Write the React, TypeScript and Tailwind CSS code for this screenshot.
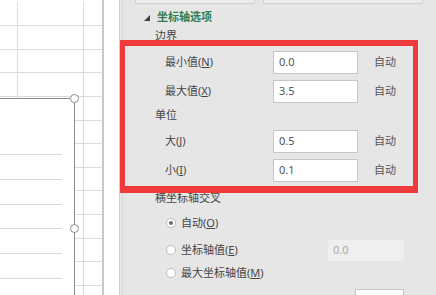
import React from "react";

const font = "font-['Noto_Sans','Noto_Sans_CJK_SC',sans-serif]";

function Key({ k }: { k: string }) {
  return (
    <>
      (<span className="underline underline-offset-1">{k}</span>)
    </>
  );
}

function Sheet() {
  const rows = Array.from({ length: 13 });
  const chartLines = Array.from({ length: 6 });
  return (
    <div className="relative w-[104px] h-full bg-white border-r-2 border-[#c9c9c9] overflow-hidden shrink-0">
      <div className="flex flex-col mt-[2.35px]">
        {rows.map((_, i) => (
          <div key={i} className="flex h-[23.65px] shrink-0 border-b border-[#dcdcdc]">
            <div className="w-[18px] border-r border-[#dcdcdc]" />
            <div className="w-[66px] border-r border-[#dcdcdc]" />
            <div className="flex-1" />
          </div>
        ))}
      </div>
      {/* chart object over the grid */}
      <div className="absolute left-0 top-[98px] w-[75px] h-[260px] bg-white border-t border-r border-[#8c8c8c]">
        <div className="flex flex-col pt-[55px]">
          {chartLines.map((_, i) => (
            <div key={i} className="w-[62px] h-[24.8px] shrink-0 border-t border-[#dadada]" />
          ))}
        </div>
      </div>
      <div className="absolute left-[70px] top-[94px] w-[9px] h-[9px] rounded-full bg-white border border-[#8c8c8c]" />
      <div className="absolute left-[70px] top-[224px] w-[9px] h-[9px] rounded-full bg-white border border-[#8c8c8c]" />
    </div>
  );
}

function ValueRow({ label, k, value }: { label: string; k: string; value: string }) {
  return (
    <div className="flex items-center h-[23px] mt-[6px] shrink-0">
      <div className="w-[128px] pl-[20px] text-[11px] text-[#454545]">
        {label}
        <Key k={k} />
      </div>
      <div className="w-[85px] h-[23px] bg-white border border-[#c6c6c6] flex items-center pl-[5px] text-[11px] text-[#555]">
        {value}
      </div>
      <div className="ml-[16px] text-[11px] text-[#555]">自动</div>
    </div>
  );
}

function Radio({ on }: { on?: boolean }) {
  return (
    <div className="w-[10px] h-[10px] rounded-full bg-white border border-[#bdbdbd] flex items-center justify-center shrink-0">
      {on && <div className="w-[4px] h-[4px] rounded-full bg-[#6a6a6a]" />}
    </div>
  );
}

function Panel() {
  return (
    <div className="relative flex-1 h-full bg-[#e6e6e6] border-l border-[#cfcfcf] overflow-hidden">
      <div className="min-h-full ml-[2px] border-l border-[#d6d6d6] flex flex-col">
        <div className="flex h-[4px] ml-[12px] gap-[8px] shrink-0">
          <div className="w-[120px] border-x border-b border-[#d0d0d0] bg-[#ebebeb]" />
          <div className="w-[160px] border-x border-b border-[#d0d0d0] bg-[#ebebeb]" />
        </div>

        <div className="flex items-center h-[18px] mt-[4px] pl-[21px] shrink-0">
          <svg width="6" height="6" viewBox="0 0 6 6" className="mt-[1px]">
            <polygon points="6,0 6,6 0,6" fill="#404040" />
          </svg>
          <span className="ml-[7px] text-[11px] font-semibold text-[#2f7d52]">坐标轴选项</span>
        </div>

        <div className="flex items-center h-[18px] mt-[1px] pl-[32px] text-[11px] text-[#454545] shrink-0">边界</div>

        <div className="flex flex-col pl-[22px] shrink-0">
          <ValueRow label="最小值" k="N" value="0.0" />
          <ValueRow label="最大值" k="X" value="3.5" />
        </div>

        <div className="flex items-center h-[18px] mt-[3px] pl-[32px] text-[11px] text-[#454545] shrink-0">单位</div>

        <div className="flex flex-col pl-[22px] shrink-0">
          <ValueRow label="大" k="J" value="0.5" />
          <ValueRow label="小" k="I" value="0.1" />
        </div>

        <div className="flex items-center h-[18px] mt-[7px] pl-[32px] text-[11px] text-[#454545] shrink-0">横坐标轴交叉</div>

        <div className="flex flex-col pl-[43px] text-[11px] text-[#454545] shrink-0">
          <div className="flex items-center h-[20px] mt-[6px] gap-[5px]">
            <Radio on />
            <span>自动<Key k="O" /></span>
          </div>
          <div className="flex items-center h-[22px] mt-[6px]">
            <div className="flex items-center gap-[5px] w-[162px]">
              <Radio />
              <span>坐标轴值<Key k="E" /></span>
            </div>
            <div className="w-[76px] h-[21px] bg-[#efefef] flex items-center pl-[5px] text-[#a8a8a8]">0.0</div>
          </div>
          <div className="flex items-center h-[20px] mt-[2px] gap-[5px]">
            <Radio />
            <span>最大坐标轴值<Key k="M" /></span>
          </div>
          <div className="flex items-start h-[22px] mt-[6px]">
            <div className="flex items-center gap-[5px] w-[189px] mt-[4px]">
              <Radio />
              <span>对数刻度</span>
            </div>
            <div className="w-[49px] h-[21px] bg-white border border-[#c6c6c6]" />
          </div>
        </div>
      </div>

      {/* red highlight annotation */}
      <div className="absolute left-0 top-[40px] w-[298px] h-[153px] border-[5px] border-t-[6px] border-b-[7px] border-[#f03a3c]" />
    </div>
  );
}

export default function App() {
  return (
    <div className={`w-[436px] h-[295px] flex overflow-hidden bg-white ${font}`}>
      <Sheet />
      <div className="w-[15px] h-full bg-white shrink-0" />
      <Panel />
    </div>
  );
}
